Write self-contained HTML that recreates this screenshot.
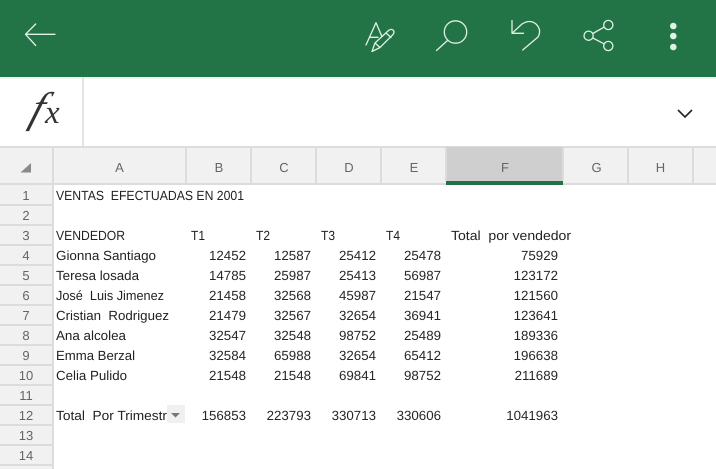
<!DOCTYPE html>
<html><head><meta charset="utf-8">
<style>
html,body{margin:0;padding:0;background:#fff;width:716px;height:469px;overflow:hidden}
svg{display:block}
text{font-family:"Liberation Sans",sans-serif;white-space:pre;text-rendering:geometricPrecision}
.c{font-size:13.2px;fill:#222}
.n{font-size:13.3px;fill:#262626;text-anchor:end}
.h{font-size:13px;fill:#666;text-anchor:middle}
.r{font-size:13px;fill:#666;text-anchor:middle}
</style></head><body>
<svg width="716" height="469" viewBox="0 0 716 469" xmlns="http://www.w3.org/2000/svg">
<rect width="716" height="469" fill="#fff"/>
<rect width="716" height="77" fill="#227346"/>
<g fill="none" stroke="#dff2e5" stroke-width="1.3" stroke-linecap="round" stroke-linejoin="round">
<path d="M25.500 34.300H55M35.700 24L25.500 34.300L35.700 45.500"/>
<path d="M366 45L376 22.700L381.700 36M369.500 37.300H378"/>
<path d="M372 51.500L375 43L388.500 30.500Q391 28.500 393 30Q395 32 393 34.500L380 47.500ZM375 43L380 47.500M386 33L391 37.500"/>
<circle cx="455.500" cy="32" r="11.200"/>
<path d="M436.500 50.500L447.500 40.500"/>
<path d="M512 20.500V33.300H523.500M512 33.300L522 24Q530 19 536 24Q542 30 538 37L522.700 50"/>
<circle cx="608.300" cy="25" r="4.600"/><circle cx="588.600" cy="35.700" r="4.600"/><circle cx="608.300" cy="46" r="4.600"/>
<path d="M592.800 33.500L604 27.200M592.800 38L604 43.800"/>
</g>
<g fill="#dff2e5"><circle cx="673.300" cy="26" r="3.300"/><circle cx="673.300" cy="36" r="3.300"/><circle cx="673.300" cy="47" r="3.300"/></g>

<rect y="77" width="716" height="2" fill="#f0f5f1"/>
<rect x="82" y="77" width="2" height="69" fill="#e4e4e4"/>
<rect y="146" width="716" height="2" fill="#dcdcdc"/>
<text transform="translate(28 122) skewX(-18)" style="font-family:'Liberation Serif',serif;font-style:italic;font-size:43px;fill:#333">f</text>
<text x="45" y="123" style="font-family:'Liberation Serif',serif;font-style:italic;font-size:33px;fill:#333">x</text>
<path d="M678 110L685 117L692 110" fill="none" stroke="#222" stroke-width="1.6"/>

<rect y="148" width="716" height="36" fill="#f1f1f1"/>
<rect y="184" width="53" height="285" fill="#f1f1f1"/>
<rect x="446" y="147" width="117" height="34" fill="#cfcfcf"/>
<rect y="183" width="716" height="2" fill="#dcdcdc"/>
<rect x="446" y="181" width="117" height="4" fill="#217346"/>
<rect x="52" y="148" width="2" height="321" fill="#dcdcdc"/>
<g fill="#dcdcdc">
<rect x="185" y="148" width="2" height="35"/><rect x="250" y="148" width="2" height="35"/><rect x="315" y="148" width="2" height="35"/><rect x="380" y="148" width="2" height="35"/><rect x="445" y="148" width="2" height="33"/><rect x="562" y="148" width="2" height="33"/><rect x="627" y="148" width="2" height="35"/><rect x="692" y="148" width="2" height="35"/>
<rect y="204" width="52" height="2"/><rect y="224" width="52" height="2"/><rect y="244" width="52" height="2"/><rect y="264" width="52" height="2"/><rect y="284" width="52" height="2"/><rect y="304" width="52" height="2"/><rect y="324" width="52" height="2"/><rect y="344" width="52" height="2"/><rect y="364" width="52" height="2"/><rect y="384" width="52" height="2"/><rect y="404" width="52" height="2"/><rect y="424" width="52" height="2"/><rect y="444" width="52" height="2"/><rect y="464" width="52" height="2"/>
</g>
<path d="M20.500 172.500H31V163Z" fill="#8a8a8a"/>

<text class="h" x="119.500" y="172">A</text><text class="h" x="219" y="172">B</text><text class="h" x="284" y="172">C</text><text class="h" x="349" y="172">D</text><text class="h" x="414" y="172">E</text><text class="h" x="505" y="172">F</text><text class="h" x="596.500" y="172">G</text><text class="h" x="660.500" y="172">H</text>

<text class="r" x="26" y="200">1</text><text class="r" x="26" y="220">2</text><text class="r" x="26" y="240">3</text><text class="r" x="26" y="260">4</text><text class="r" x="26" y="280">5</text><text class="r" x="26" y="300">6</text><text class="r" x="26" y="320">7</text><text class="r" x="26" y="340">8</text><text class="r" x="26" y="360">9</text><text class="r" x="26" y="380">10</text><text class="r" x="26" y="400">11</text><text class="r" x="26" y="420">12</text><text class="r" x="26" y="440">13</text><text class="r" x="26" y="460">14</text>

<text class="c" x="56" y="200" textLength="188" lengthAdjust="spacingAndGlyphs">VENTAS  EFECTUADAS EN 2001</text>
<text class="c" x="56" y="240" textLength="69" lengthAdjust="spacingAndGlyphs">VENDEDOR</text>
<text class="c" x="191" y="240" textLength="14" lengthAdjust="spacingAndGlyphs">T1</text>
<text class="c" x="256" y="240" textLength="14" lengthAdjust="spacingAndGlyphs">T2</text>
<text class="c" x="321" y="240" textLength="14" lengthAdjust="spacingAndGlyphs">T3</text>
<text class="c" x="386" y="240" textLength="14" lengthAdjust="spacingAndGlyphs">T4</text>
<text class="c" x="451" y="240" textLength="120" lengthAdjust="spacingAndGlyphs">Total  por vendedor</text>
<text class="c" x="56" y="260" textLength="100" lengthAdjust="spacingAndGlyphs">Gionna Santiago</text>
<text class="c" x="56" y="280" textLength="83" lengthAdjust="spacingAndGlyphs">Teresa losada</text>
<text class="c" x="56" y="300" textLength="108" lengthAdjust="spacingAndGlyphs">José  Luis Jimenez</text>
<text class="c" x="56" y="320" textLength="113" lengthAdjust="spacingAndGlyphs">Cristian  Rodriguez</text>
<text class="c" x="56" y="340" textLength="70" lengthAdjust="spacingAndGlyphs">Ana alcolea</text>
<text class="c" x="56" y="360" textLength="79" lengthAdjust="spacingAndGlyphs">Emma Berzal</text>
<text class="c" x="56" y="380" textLength="71" lengthAdjust="spacingAndGlyphs">Celia Pulido</text>
<text class="c" x="56" y="420" textLength="111" lengthAdjust="spacingAndGlyphs">Total  Por Trimestr</text>
<rect x="167" y="405" width="18" height="18" fill="#f0f0f0"/>
<path d="M171 413H180L175.500 417.500Z" fill="#777"/>

<text class="n" x="246" y="260">12452</text><text class="n" x="311" y="260">12587</text><text class="n" x="376" y="260">25412</text><text class="n" x="441" y="260">25478</text><text class="n" x="558" y="260">75929</text>
<text class="n" x="246" y="280">14785</text><text class="n" x="311" y="280">25987</text><text class="n" x="376" y="280">25413</text><text class="n" x="441" y="280">56987</text><text class="n" x="558" y="280">123172</text>
<text class="n" x="246" y="300">21458</text><text class="n" x="311" y="300">32568</text><text class="n" x="376" y="300">45987</text><text class="n" x="441" y="300">21547</text><text class="n" x="558" y="300">121560</text>
<text class="n" x="246" y="320">21479</text><text class="n" x="311" y="320">32567</text><text class="n" x="376" y="320">32654</text><text class="n" x="441" y="320">36941</text><text class="n" x="558" y="320">123641</text>
<text class="n" x="246" y="340">32547</text><text class="n" x="311" y="340">32548</text><text class="n" x="376" y="340">98752</text><text class="n" x="441" y="340">25489</text><text class="n" x="558" y="340">189336</text>
<text class="n" x="246" y="360">32584</text><text class="n" x="311" y="360">65988</text><text class="n" x="376" y="360">32654</text><text class="n" x="441" y="360">65412</text><text class="n" x="558" y="360">196638</text>
<text class="n" x="246" y="380">21548</text><text class="n" x="311" y="380">21548</text><text class="n" x="376" y="380">69841</text><text class="n" x="441" y="380">98752</text><text class="n" x="558" y="380">211689</text>
<text class="n" x="246" y="420">156853</text><text class="n" x="311" y="420">223793</text><text class="n" x="376" y="420">330713</text><text class="n" x="441" y="420">330606</text><text class="n" x="558" y="420">1041963</text>
</svg>
</body></html>
